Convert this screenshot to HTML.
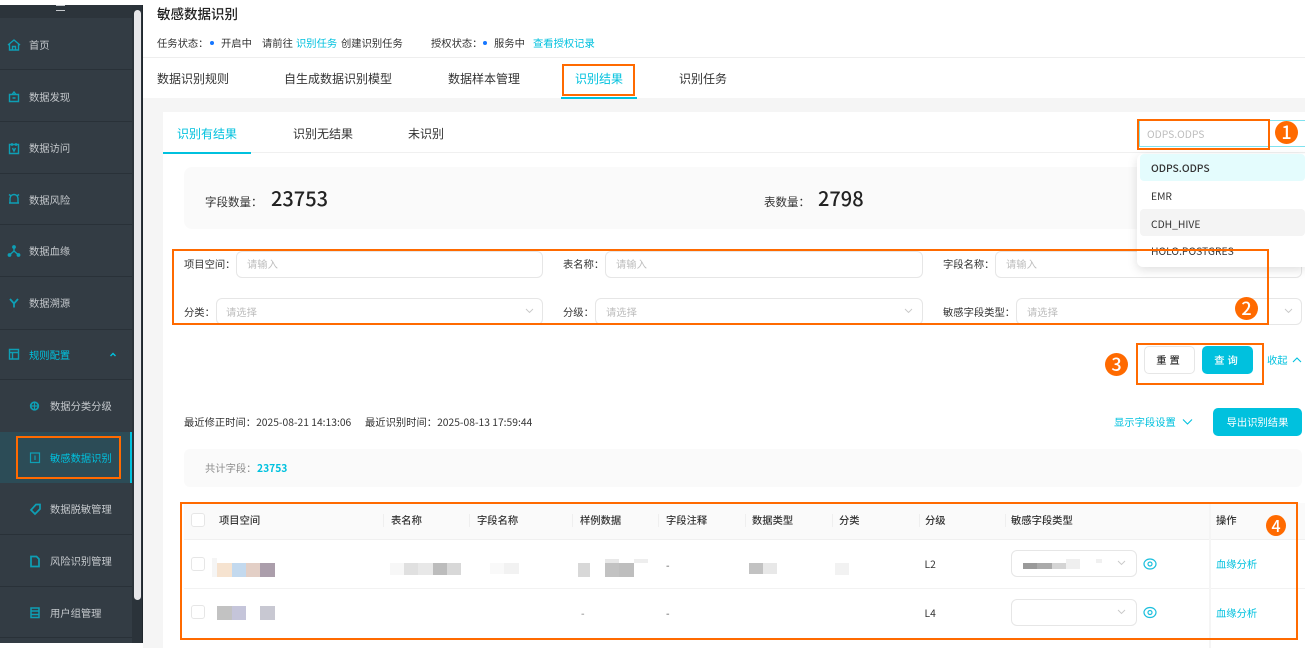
<!DOCTYPE html>
<html lang="zh"><head><meta charset="utf-8"><title>敏感数据识别</title>
<style>
html,body{margin:0;padding:0;width:1305px;height:648px;overflow:hidden;background:#fff}
body{position:relative;font-family:"Noto Sans CJK SC","Liberation Sans",sans-serif;font-size:10.3px;color:#333;-webkit-font-smoothing:antialiased}
.a{position:absolute}
.t{position:absolute;white-space:nowrap;line-height:20px;height:20px}
.c{color:#00c1de}
.n{color:#c4c8cc}
.g{color:#bdbdbd}
.h{font-weight:500;color:#333}
.o{position:absolute;border:2px solid #ff6a00;box-sizing:border-box;z-index:30}
.b{position:absolute;background:#ff6a00;color:#fff;border-radius:50%;text-align:center;font-weight:500;z-index:31}
.i{position:absolute;border:1px solid #e6e6e6;border-radius:6px;box-sizing:border-box;background:#fff}
.l{position:absolute;height:1px;background:#293138;left:0;width:132px}
.s{position:absolute;width:1px;height:13px;top:514px;background:#efefef}
.cb{position:absolute;width:14px;height:14px;border:1px solid #e6e6e6;border-radius:3px;box-sizing:border-box;background:#fff;left:191px}
svg{position:absolute;overflow:visible}
</style></head><body>

<!-- sidebar -->
<div class="a" style="left:0;top:5px;width:143px;height:638px;background:#333c44"></div>
<div class="a" style="left:0;top:5px;width:133px;height:13px;background:#2c343b"></div>
<div class="a" style="left:56px;top:5px;width:9px;height:6px;border-top:1px solid #c4c8cc;border-bottom:1px solid #c4c8cc;box-sizing:border-box"></div>
<div class="a" style="left:132px;top:5px;width:10px;height:638px;background:#2b333a"></div>
<div class="a" style="left:134px;top:10px;width:7px;height:590px;background:#e7e7ea;border-radius:4px"></div>
<div class="a" style="left:142px;top:5px;width:1px;height:638px;background:#20272d"></div>
<div class="l" style="top:69px"></div><div class="l" style="top:121px"></div><div class="l" style="top:173px"></div><div class="l" style="top:224px"></div><div class="l" style="top:276px"></div><div class="l" style="top:329px"></div><div class="l" style="top:379px"></div><div class="l" style="top:534px"></div><div class="l" style="top:586px"></div><div class="l" style="top:637px"></div>
<div class="a" style="left:0;top:432px;width:130px;height:51px;background:#2c4c57"></div>
<div class="a" style="left:130px;top:432px;width:2px;height:51px;background:#00c1de"></div>

<svg style="left:0;top:0" width="132" height="640" fill="none" stroke="#0e9fb5" stroke-width="1.4">
<path d="M8 45l6-5 6 5M9.500 44v6h9v-6M12.500 50v-3.500h3V50"/>
<path d="M9.500 94.500h9v7h-9zM12 94.500l2-2.500 2 2.500M12.500 98h3"/>
<path d="M9.500 144.500h9v9h-9zM12 143v3M16 143v3M12.500 148l1.500 3 1.500-3"/>
<path d="M10 203v-4.500a4 4 0 0 1 8 0V203M9 203h10M9 194.500l1.500 1M19 194.500l-1.500 1" />
<path d="M14 247.500v4M14 251l-4 3.500M14 251l4 3.500"/><circle cx="14" cy="247" r="1.200" fill="#0e9fb5"/><circle cx="9.500" cy="255" r="1.200" fill="#0e9fb5"/><circle cx="18.500" cy="255" r="1.200" fill="#0e9fb5"/>
<path d="M10 299l4 4.500 4-4.500M14 303.500v4" stroke-width="1.800"/>
<path d="M9.500 349.500h9v9.500h-9zM9.500 352.500h9M12.500 352.500v6.500"/>
<circle cx="34.500" cy="406" r="3.800" stroke-width="1.700"/><path d="M30.500 406h8M34.500 402v8" stroke-width="1.200"/>
<path d="M30.500 453h9v9.500h-9zM35 455.500v4.500" stroke-width="1.200"/>
<path d="M31 510l5-5.500h4v4.500l-5 5z" stroke-width="1.700"/>
<path d="M31 556.500h5.500l2.500 2.500v7.500h-8z" stroke-width="1.700"/>
<path d="M31 608h8v9.500h-8zM31 611h8M31 614.500h8" stroke-width="1.500"/>
</svg>
<svg style="left:108px;top:351px" width="10" height="6" fill="none" stroke="#00c1de" stroke-width="1.400"><path d="M2.500 5l2.500-2.500L7.500 5"/></svg>

<span class="t n" style="left:29px;top:35px">首页</span>
<span class="t n" style="left:29px;top:87px">数据发现</span>
<span class="t n" style="left:29px;top:138px">数据访问</span>
<span class="t n" style="left:29px;top:190px">数据风险</span>
<span class="t n" style="left:29px;top:241px">数据血缘</span>
<span class="t n" style="left:29px;top:293px">数据溯源</span>
<span class="t c" style="left:29px;top:345px">规则配置</span>
<span class="t n" style="left:50px;top:396px">数据分类分级</span>
<span class="t c" style="left:50px;top:448px">敏感数据识别</span>
<span class="t n" style="left:50px;top:499px">数据脱敏管理</span>
<span class="t n" style="left:50px;top:551px">风险识别管理</span>
<span class="t n" style="left:50px;top:603px">用户组管理</span>
<div class="o" style="left:16px;top:436px;width:105px;height:43px"></div>

<!-- main header -->
<div class="a" style="left:143px;top:98px;width:1162px;height:550px;background:#f5f5f5"></div>
<div class="a" style="left:143px;top:57px;width:1162px;height:1px;background:#eee"></div>
<span class="t" style="left:157px;top:3px;font-size:13.500px;font-weight:500;color:#222">敏感数据识别</span>
<span class="t" style="left:157px;top:33px">任务状态：</span>
<div class="a" style="left:210px;top:41px;width:4px;height:4px;border-radius:50%;background:#1677ff"></div>
<span class="t" style="left:221px;top:33px">开启中</span>
<span class="t" style="left:262px;top:33px">请前往</span>
<span class="t c" style="left:296px;top:33px">识别任务</span>
<span class="t" style="left:341px;top:33px">创建识别任务</span>
<span class="t" style="left:431px;top:33px">授权状态：</span>
<div class="a" style="left:483px;top:41px;width:4px;height:4px;border-radius:50%;background:#1677ff"></div>
<span class="t" style="left:494px;top:33px">服务中</span>
<span class="t c" style="left:533px;top:33px">查看授权记录</span>
<span class="t" style="left:157px;top:69px;font-size:12px">数据识别规则</span>
<span class="t" style="left:284px;top:69px;font-size:12px">自生成数据识别模型</span>
<span class="t" style="left:448px;top:69px;font-size:12px">数据样本管理</span>
<span class="t c" style="left:575px;top:69px;font-size:12px">识别结果</span>
<span class="t" style="left:679px;top:69px;font-size:12px">识别任务</span>
<div class="a" style="left:561px;top:97px;width:76px;height:2px;background:#00c1de"></div>
<div class="o" style="left:562px;top:64px;width:73px;height:32px"></div>

<!-- card -->
<div class="a" style="left:163px;top:112px;width:1142px;height:536px;background:#fff"></div>
<div class="a" style="left:163px;top:152px;width:1142px;height:1px;background:#f0f0f0"></div>
<div class="a" style="left:163px;top:152px;width:88px;height:1.500px;background:#00c1de"></div>
<span class="t c" style="left:177px;top:124px;font-size:12px">识别有结果</span>
<span class="t" style="left:293px;top:124px;font-size:12px">识别无结果</span>
<span class="t" style="left:408px;top:124px;font-size:12px">未识别</span>

<div class="a" style="left:184px;top:167px;width:1121px;height:62px;background:#fafafa;border-radius:8px"></div>
<span class="t" style="left:205px;top:192px;font-size:11.500px">字段数量：</span>
<span class="t" style="left:271px;top:188px;font-size:20px;font-weight:500;color:#222">23753</span>
<span class="t" style="left:764px;top:192px;font-size:11.500px">表数量：</span>
<span class="t" style="left:818px;top:188px;font-size:20px;font-weight:500;color:#222">2798</span>

<!-- filters -->
<span class="t" style="left:184px;top:254px">项目空间：</span>
<div class="i" style="left:236px;top:251px;width:307px;height:27px"></div><span class="t g" style="left:247px;top:254px">请输入</span>
<span class="t" style="left:563px;top:254px">表名称：</span>
<div class="i" style="left:605px;top:251px;width:318px;height:27px"></div><span class="t g" style="left:616px;top:254px">请输入</span>
<span class="t" style="left:943px;top:254px">字段名称：</span>
<div class="i" style="left:995px;top:251px;width:307px;height:27px"></div><span class="t g" style="left:1006px;top:254px">请输入</span>
<span class="t" style="left:184px;top:302px">分类：</span>
<div class="i" style="left:216px;top:298px;width:327px;height:27px"></div><span class="t g" style="left:226px;top:302px">请选择</span>
<span class="t" style="left:563px;top:302px">分级：</span>
<div class="i" style="left:595px;top:298px;width:328px;height:27px"></div><span class="t g" style="left:606px;top:302px">请选择</span>
<span class="t" style="left:943px;top:302px">敏感字段类型：</span>
<div class="i" style="left:1016px;top:298px;width:286px;height:27px"></div><span class="t g" style="left:1027px;top:302px">请选择</span>
<svg style="left:0;top:0" width="1305" height="648" fill="none" stroke="#c8c8c8" stroke-width="0.900">
<path d="M526 309l3.500 3.500 3.500-3.500M905 309l3.500 3.500 3.500-3.500M1285 309l3.500 3.500 3.500-3.500"/>
</svg>

<!-- dropdown -->
<div class="a" style="left:1139px;top:120px;width:170px;height:27px;border:1px solid #7fe2ef;box-sizing:border-box;background:#fff"></div>
<span class="t g" style="left:1147px;top:124px">ODPS.ODPS</span>
<div class="a" style="left:1137px;top:154px;width:168px;height:113px;background:#fff;border-radius:6px 0 0 6px;box-shadow:0 3px 10px rgba(0,0,0,.13);z-index:5"></div>
<div class="a" style="left:1140px;top:154px;width:165px;height:27px;background:#e4fcfd;border-radius:4px;z-index:6"></div>
<div class="a" style="left:1140px;top:209px;width:165px;height:27px;background:#f4f4f4;border-radius:4px;z-index:6"></div>
<span class="t" style="left:1151px;top:158px;font-weight:500;z-index:7">ODPS.ODPS</span>
<span class="t" style="left:1151px;top:186px;z-index:7">EMR</span>
<span class="t" style="left:1151px;top:214px;z-index:7">CDH_HIVE</span>
<span class="t" style="left:1151px;top:241px;z-index:7">HOLO.POSTGRES</span>

<div class="o" style="left:1137px;top:119px;width:133px;height:31px"></div>
<div class="b" style="left:1275px;top:121px;width:23px;height:23px;font-size:18px;line-height:23px">1</div>
<div class="o" style="left:172px;top:249px;width:1097px;height:76px"></div>
<div class="b" style="left:1235px;top:297px;width:23px;height:23px;font-size:18px;line-height:23px">2</div>

<!-- buttons -->
<div class="a" style="left:1144px;top:346px;width:51px;height:28px;border:1px solid #e6e6e6;border-radius:5px;box-sizing:border-box;text-align:center;line-height:26px;letter-spacing:3px;font-weight:500">重置</div>
<div class="a" style="left:1202px;top:346px;width:51px;height:28px;background:#00c1de;color:#fff;border-radius:5px;text-align:center;line-height:28px;letter-spacing:3px;font-weight:500">查询</div>
<div class="o" style="left:1136px;top:343px;width:128px;height:42px"></div>
<div class="b" style="left:1105px;top:353px;width:23px;height:23px;font-size:18px;line-height:23px">3</div>
<span class="t c" style="left:1267px;top:350px">收起</span>
<svg style="left:1292px;top:356px" width="10" height="8" fill="none" stroke="#00c1de" stroke-width="1.100"><path d="M1 6l4-4 4 4"/></svg>

<span class="t" style="left:184px;top:412px">最近修正时间：2025-08-21 14:13:06</span>
<span class="t" style="left:365px;top:412px">最近识别时间：2025-08-13 17:59:44</span>
<span class="t c" style="left:1114px;top:412px">显示字段设置</span>
<svg style="left:1182px;top:418px" width="11" height="8" fill="none" stroke="#00c1de" stroke-width="1.100"><path d="M1 1.500l4.500 4.500 4.500-4.500"/></svg>
<div class="a" style="left:1213px;top:408px;width:89px;height:28px;background:#00c1de;color:#fff;border-radius:5px;text-align:center;line-height:28px">导出识别结果</div>

<div class="a" style="left:184px;top:449px;width:1118px;height:38px;background:#fafafa;border-radius:6px"></div>
<span class="t" style="left:205px;top:458px;color:#8c8c8c">共计字段：</span>
<span class="t c" style="left:257px;top:458px;font-weight:700">23753</span>

<!-- table -->
<div class="a" style="left:184px;top:503px;width:1121px;height:37px;background:#fafafa"></div>
<div class="a" style="left:184px;top:539px;width:1121px;height:1px;background:#f0f0f0"></div>
<div class="a" style="left:184px;top:588px;width:1121px;height:1px;background:#f2f2f2"></div>
<div class="a" style="left:1209px;top:503px;width:2px;height:145px;background:#f5f5f5"></div>
<div class="s" style="left:383px"></div><div class="s" style="left:469px"></div><div class="s" style="left:572px"></div><div class="s" style="left:658px"></div><div class="s" style="left:745px"></div><div class="s" style="left:832px"></div><div class="s" style="left:919px"></div><div class="s" style="left:1005px"></div>
<div class="cb" style="top:513px"></div><div class="cb" style="top:557px"></div><div class="cb" style="top:605px"></div>
<span class="t h" style="left:219px;top:510px">项目空间</span>
<span class="t h" style="left:391px;top:510px">表名称</span>
<span class="t h" style="left:477px;top:510px">字段名称</span>
<span class="t h" style="left:580px;top:510px">样例数据</span>
<span class="t h" style="left:666px;top:510px">字段注释</span>
<span class="t h" style="left:752px;top:510px">数据类型</span>
<span class="t h" style="left:839px;top:510px">分类</span>
<span class="t h" style="left:925px;top:510px">分级</span>
<span class="t h" style="left:1011px;top:510px">敏感字段类型</span>
<span class="t h" style="left:1216px;top:510px">操作</span>

<!-- mosaics -->
<svg style="left:0;top:0" width="1305" height="648">
<g shape-rendering="crispEdges">
<rect x="212" y="558" width="5" height="19" fill="#f5f5f5"/><rect x="217" y="563" width="15" height="14" fill="#f6e3d0"/><rect x="232" y="563" width="14" height="14" fill="#c3d9ee"/><rect x="246" y="563" width="14" height="14" fill="#e3cfc6"/><rect x="260" y="563" width="15" height="14" fill="#ab9eab"/>
<rect x="390" y="563" width="14" height="12" fill="#f7f7f7"/><rect x="404" y="563" width="14" height="12" fill="#e0e0e0"/><rect x="418" y="563" width="15" height="12" fill="#e8e8e8"/><rect x="433" y="563" width="14" height="12" fill="#bcbcbc"/><rect x="447" y="563" width="14" height="12" fill="#d8d8d8"/>
<rect x="490" y="563" width="14" height="11" fill="#f9f9f9"/><rect x="504" y="563" width="15" height="11" fill="#f2f2f2"/>
<rect x="578" y="563" width="12" height="14" fill="#d8d8d8"/><rect x="605" y="563" width="14" height="14" fill="#c2c2c2"/><rect x="619" y="563" width="15" height="14" fill="#bebebe"/><rect x="605" y="559" width="14" height="4" fill="#e8e8e8"/><rect x="634" y="559" width="14" height="4" fill="#eeeeee"/>
<rect x="217" y="606" width="15" height="14" fill="#c2c2c2"/><rect x="232" y="606" width="14" height="14" fill="#c5c5da"/><rect x="260" y="606" width="15" height="14" fill="#c8c8d2"/>
<rect x="749" y="563" width="14" height="11" fill="#c2c2c2"/><rect x="763" y="563" width="14" height="11" fill="#e8e8e8"/><rect x="835" y="563" width="14" height="12" fill="#f2f2f2"/>
</g></svg>
<span class="t" style="left:581px;top:603px;color:#777">-</span>
<span class="t" style="left:666px;top:555px;color:#555">-</span>
<span class="t" style="left:666px;top:603px;color:#555">-</span>
<span class="t" style="left:924.500px;top:554px">L2</span>
<span class="t" style="left:924.500px;top:603px">L4</span>
<div class="i" style="left:1011px;top:550px;width:126px;height:27px;z-index:1"></div>
<div class="i" style="left:1011px;top:599px;width:126px;height:27px;z-index:1"></div>
<svg style="left:0;top:0;z-index:2" width="1305" height="648">
<g shape-rendering="crispEdges">
<rect x="1023" y="563" width="14" height="6" fill="#9a9a9a"/><rect x="1037" y="563" width="15" height="6" fill="#aaaaaa"/><rect x="1052" y="563" width="14" height="6" fill="#d4d4d4"/><rect x="1066" y="559" width="14" height="10" fill="#efefef"/><rect x="1096" y="559" width="6" height="4" fill="#f0f0f0"/>
</g>
<path d="M1118 561l3.500 3.500 3.500-3.500M1118 610l3.500 3.500 3.500-3.500" fill="none" stroke="#c8c8c8" stroke-width="0.900"/>
<g fill="none" stroke="#1bbfdd" stroke-width="1.200"><ellipse cx="1150" cy="564" rx="6" ry="5"/><circle cx="1150" cy="564" r="2"/><ellipse cx="1150" cy="612.500" rx="6" ry="5"/><circle cx="1150" cy="612.500" r="2"/></g>
</svg>
<span class="t c" style="left:1216px;top:554px">血缘分析</span>
<span class="t c" style="left:1216px;top:603px">血缘分析</span>
<div class="o" style="left:180px;top:502px;width:1118px;height:138px"></div>
<div class="b" style="left:1266px;top:515px;width:20px;height:21px;font-size:16px;line-height:21px">4</div>

</body></html>
